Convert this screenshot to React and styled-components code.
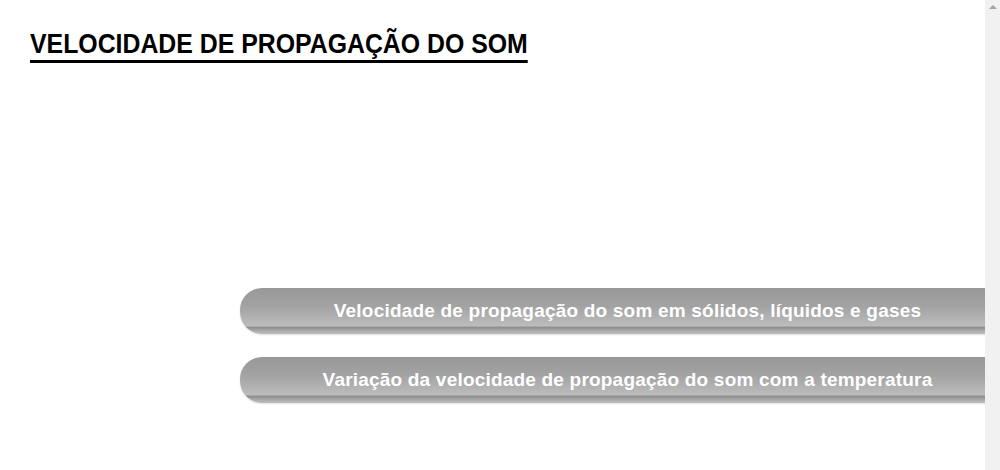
import React from "react";
import styled, { createGlobalStyle } from "styled-components";

const GlobalStyle = createGlobalStyle`
  html {
    overflow-x: hidden;
  }
  body {
    margin: 0;
    background: #fff;
    font-family: "Liberation Sans", Arial, sans-serif;
  }
`;

const Page = styled.div`
  padding: 29px 0 0 30px;
  overflow: hidden;
`;

const Title = styled.h1`
  display: inline-block;
  margin: 0;
  font-size: 27px;
  font-weight: 700;
  color: #000;
  line-height: 31px;
  border-bottom: 3px solid #000;
  transform: scaleX(0.92);
  transform-origin: left center;
`;

const Menu = styled.div`
  display: flex;
  flex-direction: column;
  gap: 23px;
  margin: 225px 0 0 210px;
  width: 775px;
  padding-bottom: 20px;
`;

const MenuButton = styled.button`
  display: block;
  width: 100%;
  height: 46px;
  border: 0;
  border-radius: 22px 0 0 22px;
  padding: 0;
  font-family: inherit;
  font-size: 19px;
  font-weight: 700;
  letter-spacing: 0.2px;
  color: #fff;
  text-align: center;
  cursor: pointer;
  background: linear-gradient(
    to bottom,
    #989898 0%,
    #a3a3a3 40%,
    #bcbcbc 82%,
    #8e8e8e 86%,
    #a8a8a8 92%,
    #bdbdbd 100%
  );
  box-shadow: 0 1px 2px rgba(0, 0, 0, 0.12);
`;

/* stand-in for the browser's vertical scrollbar */
const ScrollTrack = styled.div`
  position: fixed;
  top: 0;
  right: 0;
  bottom: 0;
  width: 15px;
  background: #f1f1f1;
  display: flex;
  justify-content: center;
  padding-top: 5px;
  box-sizing: border-box;
`;

const ArrowUp = styled.div`
  width: 0;
  height: 0;
  border-left: 4px solid transparent;
  border-right: 4px solid transparent;
  border-bottom: 4px solid #a3a3a3;
`;

const items = [
  "Velocidade de propagação do som em sólidos, líquidos e gases",
  "Variação da velocidade de propagação do som com a temperatura",
];

export default function App() {
  return (
    <>
      <GlobalStyle />
      <Page>
        <Title>VELOCIDADE DE PROPAGAÇÃO DO SOM</Title>
        <Menu>
          {items.map((label) => (
            <MenuButton key={label}>{label}</MenuButton>
          ))}
        </Menu>
      </Page>
      <ScrollTrack>
        <ArrowUp />
      </ScrollTrack>
    </>
  );
}
